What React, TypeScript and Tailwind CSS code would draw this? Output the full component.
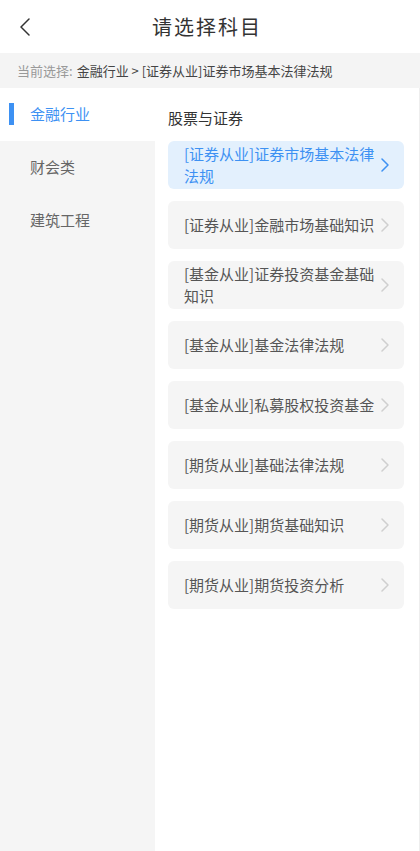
import { useState } from "react";

const categories = ["金融行业", "财会类", "建筑工程"];

const subjects = [
  "[证券从业]证券市场基本法律法规",
  "[证券从业]金融市场基础知识",
  "[基金从业]证券投资基金基础知识",
  "[基金从业]基金法律法规",
  "[基金从业]私募股权投资基金",
  "[期货从业]基础法律法规",
  "[期货从业]期货基础知识",
  "[期货从业]期货投资分析",
];

const Chevron = ({ className }: { className?: string }) => (
  <svg viewBox="0 0 8 14" className={className} fill="none" stroke="currentColor" strokeWidth={1.5} strokeLinecap="round" strokeLinejoin="round">
    <path d="M1 1l6 6-6 6" />
  </svg>
);

const App = () => {
  const [activeCat, setActiveCat] = useState(0);
  const [activeSubject, setActiveSubject] = useState(0);

  return (
    <div
      className="h-[851px] w-[420px] flex flex-col bg-white overflow-hidden"
      style={{ fontFamily: '"Noto Sans CJK SC", "Noto Sans", sans-serif' }}
    >
      {/* Header */}
      <header className="h-[53px] flex items-center relative shrink-0">
        <button className="absolute left-[20px] top-[18px] text-[#333]">
          <svg viewBox="0 0 10 18" className="w-[10px] h-[18px]" fill="none" stroke="currentColor" strokeWidth={1.5} strokeLinecap="round" strokeLinejoin="round">
            <path d="M9 1L1 9l8 8" />
          </svg>
        </button>
        <h1 className="flex-1 text-center text-[20px] leading-[28px] tracking-[2px] text-[#333] pr-[6px]">请选择科目</h1>
      </header>

      {/* Breadcrumb */}
      <div className="h-[35px] shrink-0 bg-[#f4f4f4] flex items-center px-[17px] text-[13px]">
        <span className="text-[#999]">当前选择: </span>
        <span className="text-[#444] ml-[4px]">金融行业 &gt; {subjects[activeSubject]}</span>
      </div>

      <div className="flex flex-1 min-h-0">
        {/* Left categories */}
        <aside className="w-[155px] bg-[#f5f5f5] shrink-0">
          {categories.map((c, i) => (
            <div
              key={c}
              onClick={() => setActiveCat(i)}
              className={`h-[53px] flex items-center relative pl-[30px] text-[15px] ${
                i === activeCat ? "bg-white text-[#3d91f3]" : "text-[#666]"
              }`}
            >
              {i === activeCat && (
                <span className="absolute left-[9px] top-[15px] h-[22px] w-[5px] bg-[#3d91f3]" />
              )}
              {c}
            </div>
          ))}
        </aside>

        {/* Right subjects */}
        <main className="flex-1 pl-[13px] pr-[15px] pt-[19px] border-r border-[#eeeeee]">
          <div className="text-[15px] leading-[22px] text-[#333] mb-[12px]">股票与证券</div>
          <div className="flex flex-col gap-[12px]">
            {subjects.map((s, i) => {
              const active = i === activeSubject;
              return (
                <div
                  key={s}
                  onClick={() => setActiveSubject(i)}
                  className={`h-[48px] rounded-[6px] flex items-center pl-[16px] pr-[15px] ${
                    active ? "bg-[#e3f0fd] text-[#3d91f3]" : "bg-[#f5f5f5] text-[#555]"
                  }`}
                >
                  <span className="w-[197px] text-[15px] leading-[22px]">{s}</span>
                  <Chevron className={`w-[8px] h-[14px] shrink-0 ${active ? "text-[#3d91f3]" : "text-[#cfcfcf]"}`} />
                </div>
              );
            })}
          </div>
        </main>
      </div>
    </div>
  );
};

export default App;
